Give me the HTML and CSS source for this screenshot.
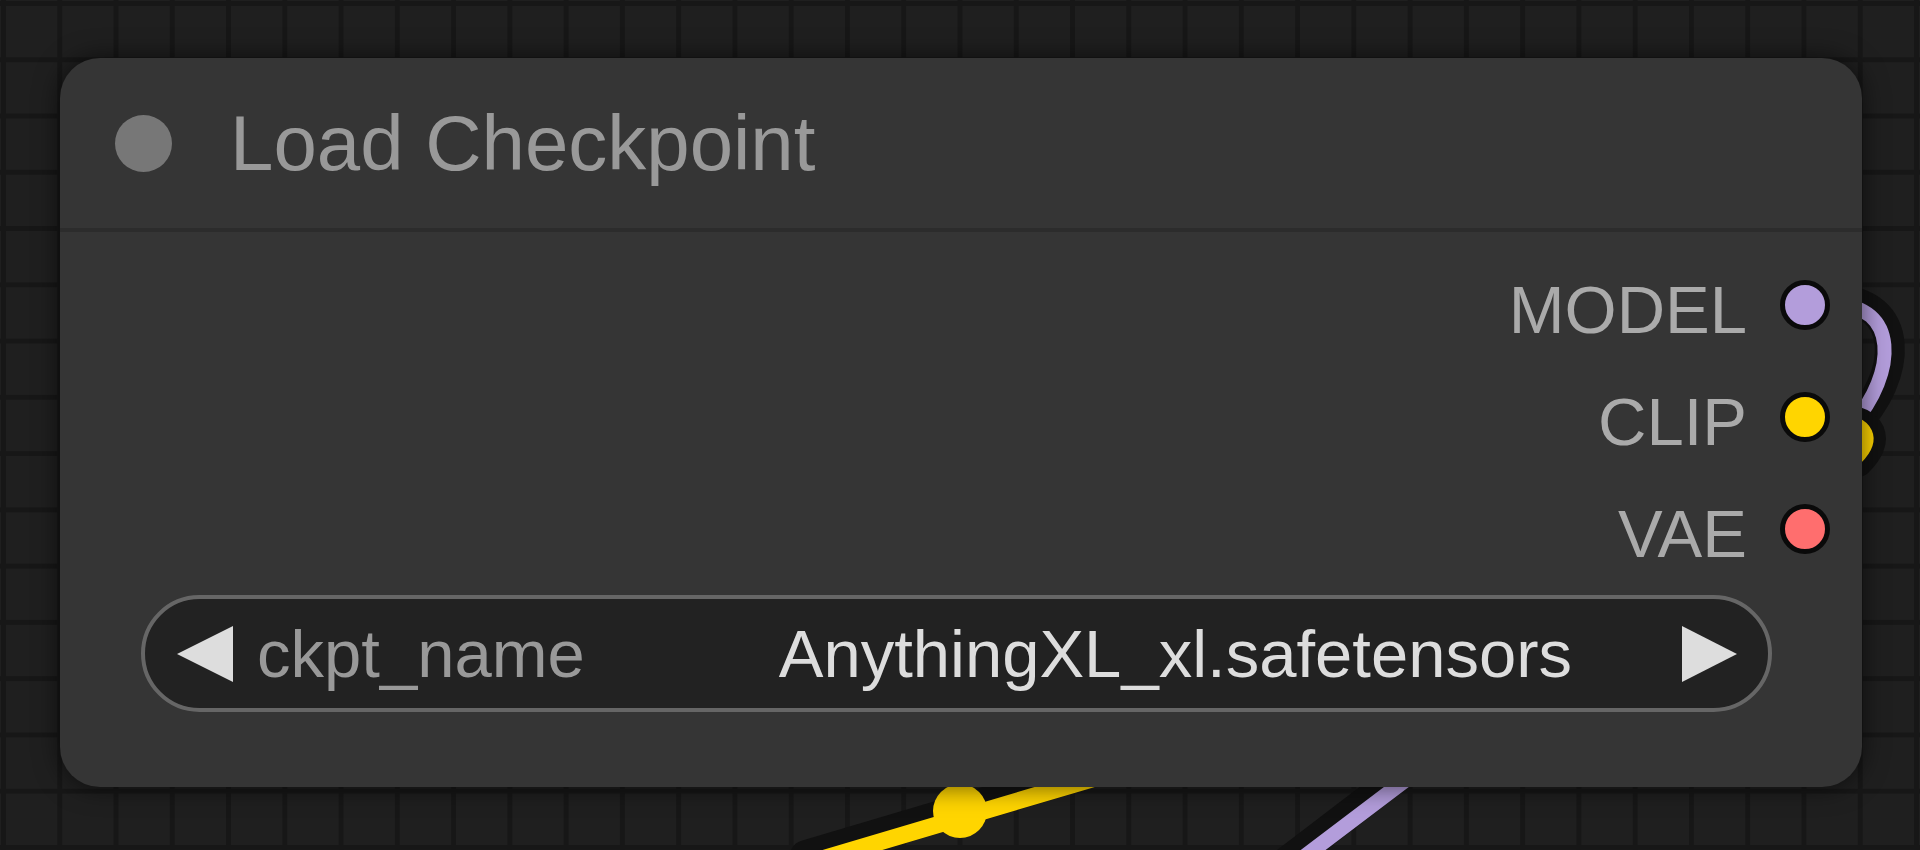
FILE: index.html
```html
<!DOCTYPE html>
<html>
  <head>
    <meta charset="utf-8" />
    <link rel="stylesheet" href="styles.css">
  </head>
  <body>
    <div class="canvas">
      <!-- links drawn under the node -->
      <svg class="links" width="1920" height="850" viewBox="0 0 1920 850">
        <g fill="none" stroke-linecap="round">
          <path class="link-edge" d="M1835 300 C1905 300, 1905 375, 1852 428" stroke-width="30" />
          <path class="link-model" d="M1835 305 C1898 305, 1898 372, 1852 425" stroke-width="14" />
          <path class="link-edge" d="M1835 418 C1875 420, 1880 440, 1858 462" stroke-width="30" />
          <path class="link-clip" d="M1835 420 C1870 422, 1874 440, 1856 458" stroke-width="14" />

          <path class="link-edge" d="M806 856 L1110 766" stroke-width="32" />
          <path class="link-clip" d="M812 862 L1112 773" stroke-width="17" />

          <path class="link-edge" d="M1286 862 L1430 752" stroke-width="30" />
          <path class="link-model" d="M1296 863 L1432 760" stroke-width="15" />
        </g>
        <circle class="link-marker" cx="960" cy="811" r="27" />
      </svg>

      <div class="node">
        <div class="node-title">
          <span class="node-dot"></span>
          <span class="node-name">Load Checkpoint</span>
        </div>

        <div class="node-body">
          <div class="outputs">
            <div class="slot">
              <span class="slot-label">MODEL</span>
              <span class="slot-dot model"></span>
            </div>
            <div class="slot">
              <span class="slot-label">CLIP</span>
              <span class="slot-dot clip"></span>
            </div>
            <div class="slot">
              <span class="slot-label">VAE</span>
              <span class="slot-dot vae"></span>
            </div>
          </div>

          <div class="combo">
            <span class="arrow arrow-left"></span>
            <span class="combo-label">ckpt_name</span>
            <span class="combo-value">AnythingXL_xl.safetensors</span>
            <span class="arrow arrow-right"></span>
          </div>
        </div>
      </div>
    </div>
  </body>
</html>
```

FILE: styles.css
```css
* {
  margin: 0;
  padding: 0;
  box-sizing: border-box;
}

body {
  width: 1920px;
  height: 850px;
  overflow: hidden;
  background: #1e1e1e;
  font-family: "Liberation Sans", Arial, sans-serif;
}

/* Graph canvas with grid */
.canvas {
  position: relative;
  width: 1920px;
  height: 850px;
  background-color: #1f1f1f;
  background-image: linear-gradient(to right, #171717 5px, transparent 5px),
    linear-gradient(to bottom, #171717 5px, transparent 5px);
  background-size: 56.28px 56.28px;
  background-position: 1px 1px;
}

.links {
  position: absolute;
  top: 0;
  left: 0;
}

.link-edge {
  stroke: #111;
}

.link-model {
  stroke: #b39ddb;
}

.link-clip {
  stroke: #ffd500;
}

.link-marker {
  fill: #ffd500;
}

/* Node */
.node {
  position: absolute;
  left: 60px;
  top: 58px;
  width: 1802px;
  height: 729px;
  background: #353535;
  border-radius: 40px;
  box-shadow: 0 0 26px rgba(0, 0, 0, 0.6);
  display: flex;
  flex-direction: column;
}

.node-title {
  height: 174px;
  display: flex;
  align-items: center;
  gap: 58px;
  padding-left: 55px;
  border-bottom: 4px solid #2c2c2c;
}

.node-dot {
  width: 57px;
  height: 57px;
  border-radius: 50%;
  background: #777;
}

.node-name {
  font-size: 78px;
  color: #999;
}

.node-body {
  padding: 17px 32px 0 81px;
}

.outputs {
  display: flex;
  flex-direction: column;
  align-items: flex-end;
}

.slot {
  height: 112px;
  display: flex;
  align-items: center;
  gap: 33px;
}

.slot-label {
  font-size: 67px;
  color: #aaa;
  padding-top: 8px;
}

.slot-dot {
  width: 50px;
  height: 50px;
  border: 5px solid #0a0a0a;
  border-radius: 50%;
}

.slot-dot.model {
  background: #b39ddb;
}

.slot-dot.clip {
  background: #ffd500;
}

.slot-dot.vae {
  background: #ff6e6e;
}

/* Combo widget */
.combo {
  margin: 10px 58px 0 0;
  height: 117px;
  border: 4px solid #666;
  border-radius: 59px;
  background: #222;
  display: flex;
  align-items: center;
  padding: 0 31px 0 32px;
  font-size: 67px;
}

.arrow {
  width: 0;
  height: 0;
  border-top: 28px solid transparent;
  border-bottom: 28px solid transparent;
}

.arrow-left {
  border-right: 56px solid #ddd;
}

.arrow-right {
  border-left: 55px solid #ddd;
}

.combo-label {
  margin-left: 24px;
  color: #999;
}

.combo-value {
  margin-left: auto;
  margin-right: 110px;
  color: #ddd;
}
```
